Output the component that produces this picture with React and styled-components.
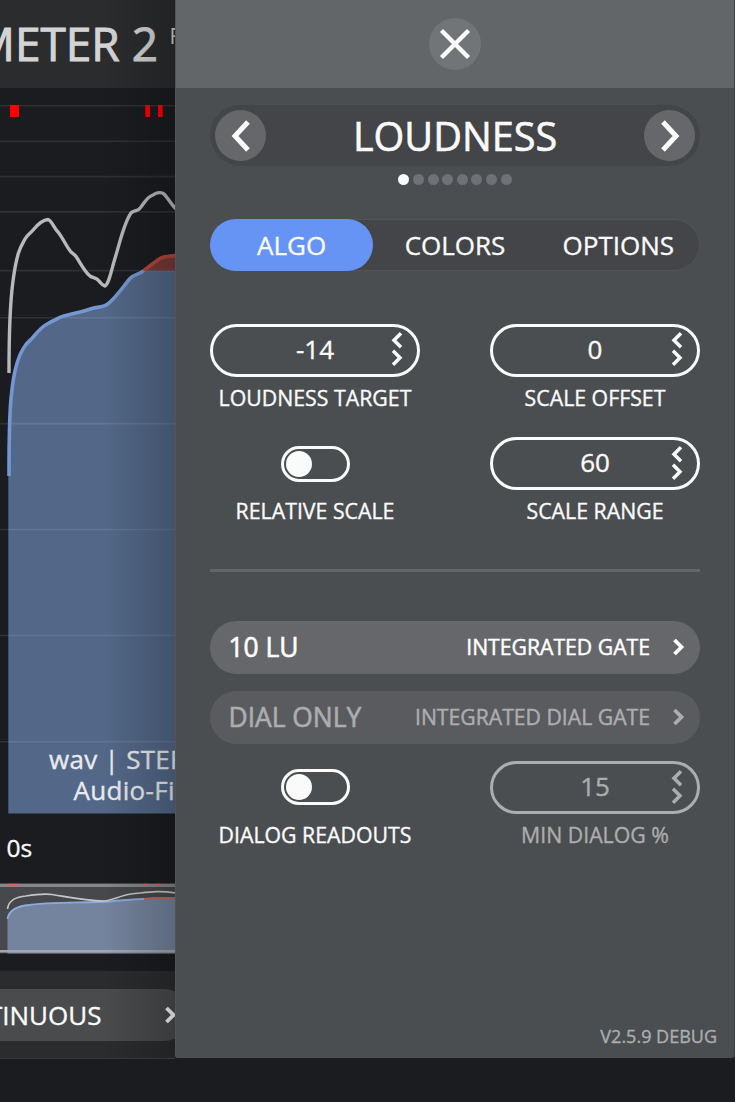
import React from 'react';
import styled, { createGlobalStyle, css } from 'styled-components';

const GlobalStyle = createGlobalStyle`
  *, *::before, *::after { box-sizing: border-box; }
  body { margin: 0; background: #1b1c20; overflow: hidden; }
  button { font: inherit; color: inherit; border: 0; background: none; padding: 0; }
  svg { display: block; flex: none; }
`;

const Window = styled.div`
  display: flex;
  width: 735px;
  height: 1102px;
  overflow: hidden;
  background: #1b1c20;
  color: #fafafa;
  font-family: 'Open Sans', 'Noto Sans', sans-serif;
  font-weight: 500;
  -webkit-text-stroke: 0.35px currentColor;
  white-space: nowrap;
`;

const Meter = styled.main`
  position: relative;
  display: flex;
  flex-direction: column;
  width: 175px;
  height: 1059px;
  overflow: hidden;
  border-bottom: 1px solid #37383a;
`;

const DrawerShadow = styled.div`
  position: absolute;
  inset: 0 0 0 auto;
  width: 72px;
  background: linear-gradient(to right, rgba(0, 0, 0, 0), rgba(0, 0, 0, 0.21));
`;

const MeterHeader = styled.header`
  display: flex;
  justify-content: flex-start;
  height: 88px;
  flex: none;
  background: #2b2c2e;
  color: #d4d4d4;
`;

const Title = styled.h1`
  display: flex;
  justify-content: flex-end;
  flex: none;
  width: 158px;
  margin: 0;
  font-size: 46px;
  line-height: 87px;
  font-weight: 500;
  -webkit-text-stroke-width: 1px;
`;

const Edition = styled.span`
  padding-left: 11.5px;
  font-size: 21px;
  line-height: 73px;
  font-weight: 400;
  -webkit-text-stroke-width: 0;
`;

const ChartArea = styled.section`
  position: relative;
  height: 730px;
  flex: none;
`;

const FileInfo = styled.div`
  position: absolute;
  left: 49px;
  top: 656px;
  font-size: 26px;
  line-height: 31px;
  letter-spacing: 0.3px;
  color: #e9ebee;
`;

const FileLine = styled.div`
  padding-left: ${(p) => p.$indent || 0}px;
`;

const TimeAxis = styled.div`
  height: 65px;
  flex: none;
  padding-left: 6.5px;
  font-size: 24.5px;
  line-height: 59px;
`;

const OverviewArea = styled.section`
  height: 88px;
  flex: none;
`;

const Footer = styled.footer`
  flex: 1;
  padding-top: 18px;
  background: #2b2c2e;
`;

const ModeButton = styled.button`
  display: flex;
  align-items: center;
  justify-content: flex-end;
  width: 200px;
  height: 52px;
  margin-left: -10px;
  padding-right: 13px;
  border-radius: 0 26px 26px 0;
  background: #4a4b4d;
  font-size: 26px;
  gap: 62.5px;
`;

const Drawer = styled.aside`
  display: flex;
  flex-direction: column;
  width: 560px;
  height: 1058px;
  border-left: 1px solid #525558;
  border-right: 1px solid #3c3e40;
  border-radius: 0 0 3px 3px;
  background: #4a4e50;
`;

const DrawerHeader = styled.header`
  display: flex;
  align-items: center;
  justify-content: center;
  height: 88px;
  flex: none;
  background: #626668;
`;

const RoundButton = styled.button`
  display: flex;
  align-items: center;
  justify-content: center;
  width: ${(p) => p.$size}px;
  height: ${(p) => p.$size}px;
  border-radius: 50%;
  background: ${(p) => p.$color};
`;

const DrawerBody = styled.div`
  display: flex;
  flex-direction: column;
  flex: 1;
  padding: 17px 34px 0;
`;

const PageNav = styled.nav`
  display: flex;
  align-items: center;
  justify-content: space-between;
  height: 61px;
  padding: 0 5px;
  border-radius: 31px;
  background: #444548;
`;

const PageTitle = styled.h2`
  margin: 0;
  font-size: 39.6px;
  line-height: 60px;
  font-weight: 500;
  -webkit-text-stroke-width: 0.6px;
`;

const Dots = styled.div`
  display: flex;
  justify-content: center;
  gap: 3.65px;
  margin-top: 8px;
`;

const Dot = styled.span`
  width: 11px;
  height: 11px;
  border-radius: 50%;
  background: ${(p) => (p.$active ? '#fafafa' : '#707176')};
`;

const Tabs = styled.div`
  display: grid;
  grid-template-columns: repeat(3, 1fr);
  height: 52.6px;
  margin-top: 33.7px;
  border-radius: 27px;
  background: #444548;
  box-shadow: inset 0 0 0 1px #545456;
`;

const Tab = styled.button`
  border-radius: 27px;
  font-size: 26px;
  line-height: 52px;
  ${(p) => p.$active && css`background: #6694f5;`}
`;

const Settings = styled.div`
  display: grid;
  grid-template-columns: 210px 210px;
  justify-content: space-between;
  row-gap: 17px;
  margin-top: ${(p) => p.$top}px;
`;

const Field = styled.div`
  display: flex;
  flex-direction: column;
  align-items: center;
  height: 96.5px;
  color: ${(p) => (p.$disabled ? '#acadae' : '#fafafa')};
`;

const FieldLabel = styled.span`
  font-size: 21.3px;
  line-height: 30px;
  margin-top: 6px;
`;

const Stepper = styled.div`
  display: grid;
  grid-template-columns: 1fr auto 1fr;
  align-items: center;
  width: 210px;
  height: 53px;
  padding-bottom: 1.5px;
  border: 3px solid currentColor;
  border-radius: 27px;
  font-size: 26px;
  line-height: 45px;
`;

const StepperValue = styled.span`
  grid-column: 2;
`;

const StepperArrows = styled.svg`
  justify-self: end;
  margin-right: 13px;
`;

const ToggleSlot = styled.div`
  display: flex;
  align-items: center;
  height: 53px;
`;

const Toggle = styled.span`
  display: flex;
  align-items: center;
  width: 69px;
  height: 36px;
  padding-left: 2px;
  border: 3px solid currentColor;
  border-radius: 18px;
`;

const Knob = styled.span`
  width: 26px;
  height: 26px;
  border-radius: 50%;
  background: currentColor;
`;

const Divider = styled.hr`
  width: 100%;
  height: 3px;
  margin: 35px 0 0;
  border: 0;
  background: #626668;
`;

const Options = styled.div`
  display: flex;
  flex-direction: column;
  gap: 17px;
  margin-top: 49px;
`;

const OptionRow = styled.button`
  display: flex;
  align-items: center;
  height: 53px;
  padding: 0 15px 1px 18.5px;
  border-radius: 27px;
  background: ${(p) => (p.$disabled ? '#5a5b5e' : '#66676b')};
  color: ${(p) => (p.$disabled ? '#acadae' : '#ffffff')};
`;

const OptionValue = styled.span`
  flex: 1;
  text-align: left;
  font-size: 26.4px;
  -webkit-text-stroke-width: 0.6px;
`;

const OptionName = styled.span`
  margin-right: 22px;
  font-size: 21.2px;
  -webkit-text-stroke-width: 0.45px;
`;

const Version = styled.div`
  margin: auto -17px 8px 0;
  text-align: right;
  font-size: 18px;
  line-height: 28px;
  color: #acadae;
`;

const Chevron = ({ w, h, d, stroke }) => (
  <svg width={w} height={h} viewBox={`0 0 ${w} ${h}`} fill="none" stroke="currentColor" strokeWidth={stroke}>
    <path d={d} />
  </svg>
);

const SmallChevron = () => <Chevron w={13} h={18} stroke={3.8} d="M2.5 2 L9.5 9 L2.5 16" />;

const StepField = ({ label, value, disabled }) => (
  <Field $disabled={disabled}>
    <Stepper>
      <StepperValue>{value}</StepperValue>
      <StepperArrows width="14" height="36" viewBox="0 0 14 36" fill="none" stroke="currentColor" strokeWidth="3.5">
        <path d="M11 2.2 L4 9.2 L11 16.2" />
        <path d="M3 19.8 L10 26.8 L3 33.8" />
      </StepperArrows>
    </Stepper>
    <FieldLabel>{label}</FieldLabel>
  </Field>
);

const ToggleField = ({ label }) => (
  <Field>
    <ToggleSlot><Toggle><Knob /></Toggle></ToggleSlot>
    <FieldLabel>{label}</FieldLabel>
  </Field>
);

const GRID_LINES = [17.8, 53.2, 88.6, 123.9, 182.6, 229.8, 335.6, 441.5, 547.5, 653.8];

const BLUE_CURVE = 'M9 388 C9 350 9 326 11.5 306 C14 280 20 264 26 256.5 C29 253 31 252 34 248 C39 242 43 238 48 235.5 C53 233 57 230.5 61 229 C73 225.5 82 224 92 220.5 C98 219 103 219 107 216.5 C115 211 122 200 130 190.5 C134 186 139 187 144 182.5';
const RED_CURVE = 'M144 182.5 C151 177 156 173 160 170.5 C164 168 169 168.5 176 167.5';

const LevelChart = () => (
  <svg width="175" height="730" viewBox="0 0 175 730" fill="none">
    <path d={`${BLUE_CURVE} H176 V725.5 H8.3 V388 Z`} fill="#536888" />
    <path d={`${RED_CURVE} V182.5 Z`} fill="#783a36" />
    <g stroke="#ffffff" strokeOpacity="0.09" strokeWidth="1.6">
      {GRID_LINES.map((y) => <path key={y} d={`M0 ${y} H175`} />)}
    </g>
    <path d={BLUE_CURVE} stroke="#7497d2" strokeWidth="3.6" />
    <path d={RED_CURVE} stroke="#b4473d" strokeWidth="3.6" />
    <path
      d="M9 285 C9 245 10 215 13 193 C17 163 21 158 25 151 C28 146 30 146 34 141 C39 135 44 132 48 131.5 C52 133 54 140 58 144 C63 150 66 158 71 164 C73 166 75 166 77 170 C81 176 85 184 90 188 C93 190 97 190 99 193 C101 195 102 197.5 105 198 C109 196 111 183 116 167 C120 154 124 135 131 125 C134 122 138 124 141 119 C145 114 147 109 153 107 C157 104 162 104 164 106 C168 110 171 116 176 121"
      stroke="#b9b9b9"
      strokeWidth="3.4"
    />
    <g fill="#ff0000">
      <rect x="10" y="17" width="9" height="12" />
      <rect x="145.3" y="17" width="4.7" height="12" />
      <rect x="158" y="17" width="4.7" height="12" />
    </g>
  </svg>
);

const Overview = () => (
  <svg width="175" height="88" viewBox="0 0 175 88" fill="none">
    <rect width="175" height="70.5" fill="#47484b" />
    <path d="M7.5 36 C9 27 16 24 25 22.5 C50 18 80 20 110 18.5 C125 16.5 134 16 144 15.5 C153 14.5 160 14 176 14 V70.5 H7.5 Z" fill="#75849e" />
    <path d="M7.5 36 C9 27 16 24 25 22.5 C50 18.5 80 20 110 18.5 C125 16.5 134 16.5 144 16" stroke="#8baae0" strokeWidth="1.8" />
    <path d="M144 16 C153 15 160 14.8 176 15" stroke="#c06a60" strokeWidth="2" />
    <path d="M7.5 26 C9 16 17 14 26 13 C35 11.5 45 10.5 52 11.5 C68 14 85 17.5 104 18 C113 17.5 120 12.5 131 11 C147 9.5 157 7 176 10" stroke="#c6c6c6" strokeWidth="1.6" />
    <rect y="1" width="175" height="3" fill="#858687" />
    <rect y="67" width="175" height="2.5" fill="#a4a8ae" />
    <g fill="#f25555">
      <rect x="9" y="0.8" width="9" height="2" />
      <rect x="144" y="0.8" width="4" height="2" />
      <rect x="156.5" y="0.8" width="4" height="2" />
    </g>
  </svg>
);

export default function App() {
  return (
    <>
      <GlobalStyle />
      <Window>
        <Meter>
          <MeterHeader>
            <Title>METER 2</Title>
            <Edition>FREE</Edition>
          </MeterHeader>
          <ChartArea>
            <LevelChart />
            <FileInfo>
              <FileLine>wav | STEREO</FileLine>
              <FileLine $indent={24.5}>Audio-File</FileLine>
            </FileInfo>
          </ChartArea>
          <TimeAxis>0s</TimeAxis>
          <OverviewArea><Overview /></OverviewArea>
          <Footer>
            <ModeButton>
              <span>CONTINUOUS</span>
              <SmallChevron />
            </ModeButton>
          </Footer>
          <DrawerShadow />
        </Meter>
        <Drawer>
          <DrawerHeader>
            <RoundButton $size={52} $color="#727577" aria-label="Close">
              <Chevron w={32} h={32} stroke={4.4} d="M2.5 2.5 L29.5 29.5 M29.5 2.5 L2.5 29.5" />
            </RoundButton>
          </DrawerHeader>
          <DrawerBody>
            <PageNav>
              <RoundButton $size={51} $color="#66676b" aria-label="Previous">
                <Chevron w={20} h={32} stroke={5} d="M17 2 L4 16 L17 30" />
              </RoundButton>
              <PageTitle>LOUDNESS</PageTitle>
              <RoundButton $size={51} $color="#66676b" aria-label="Next">
                <Chevron w={20} h={32} stroke={5} d="M3 2 L16 16 L3 30" />
              </RoundButton>
            </PageNav>
            <Dots>
              {Array.from({ length: 8 }, (_, i) => <Dot key={i} $active={i === 0} />)}
            </Dots>
            <Tabs>
              <Tab $active>ALGO</Tab>
              <Tab>COLORS</Tab>
              <Tab>OPTIONS</Tab>
            </Tabs>
            <Settings $top={52.4}>
              <StepField label="LOUDNESS TARGET" value="-14" />
              <StepField label="SCALE OFFSET" value="0" />
              <ToggleField label="RELATIVE SCALE" />
              <StepField label="SCALE RANGE" value="60" />
            </Settings>
            <Divider />
            <Options>
              <OptionRow>
                <OptionValue>10 LU</OptionValue>
                <OptionName>INTEGRATED GATE</OptionName>
                <SmallChevron />
              </OptionRow>
              <OptionRow $disabled>
                <OptionValue>DIAL ONLY</OptionValue>
                <OptionName>INTEGRATED DIAL GATE</OptionName>
                <SmallChevron />
              </OptionRow>
            </Options>
            <Settings $top={17.2}>
              <ToggleField label="DIALOG READOUTS" />
              <StepField label="MIN DIALOG %" value="15" disabled />
            </Settings>
            <Version>V2.5.9 DEBUG</Version>
          </DrawerBody>
        </Drawer>
      </Window>
    </>
  );
}
